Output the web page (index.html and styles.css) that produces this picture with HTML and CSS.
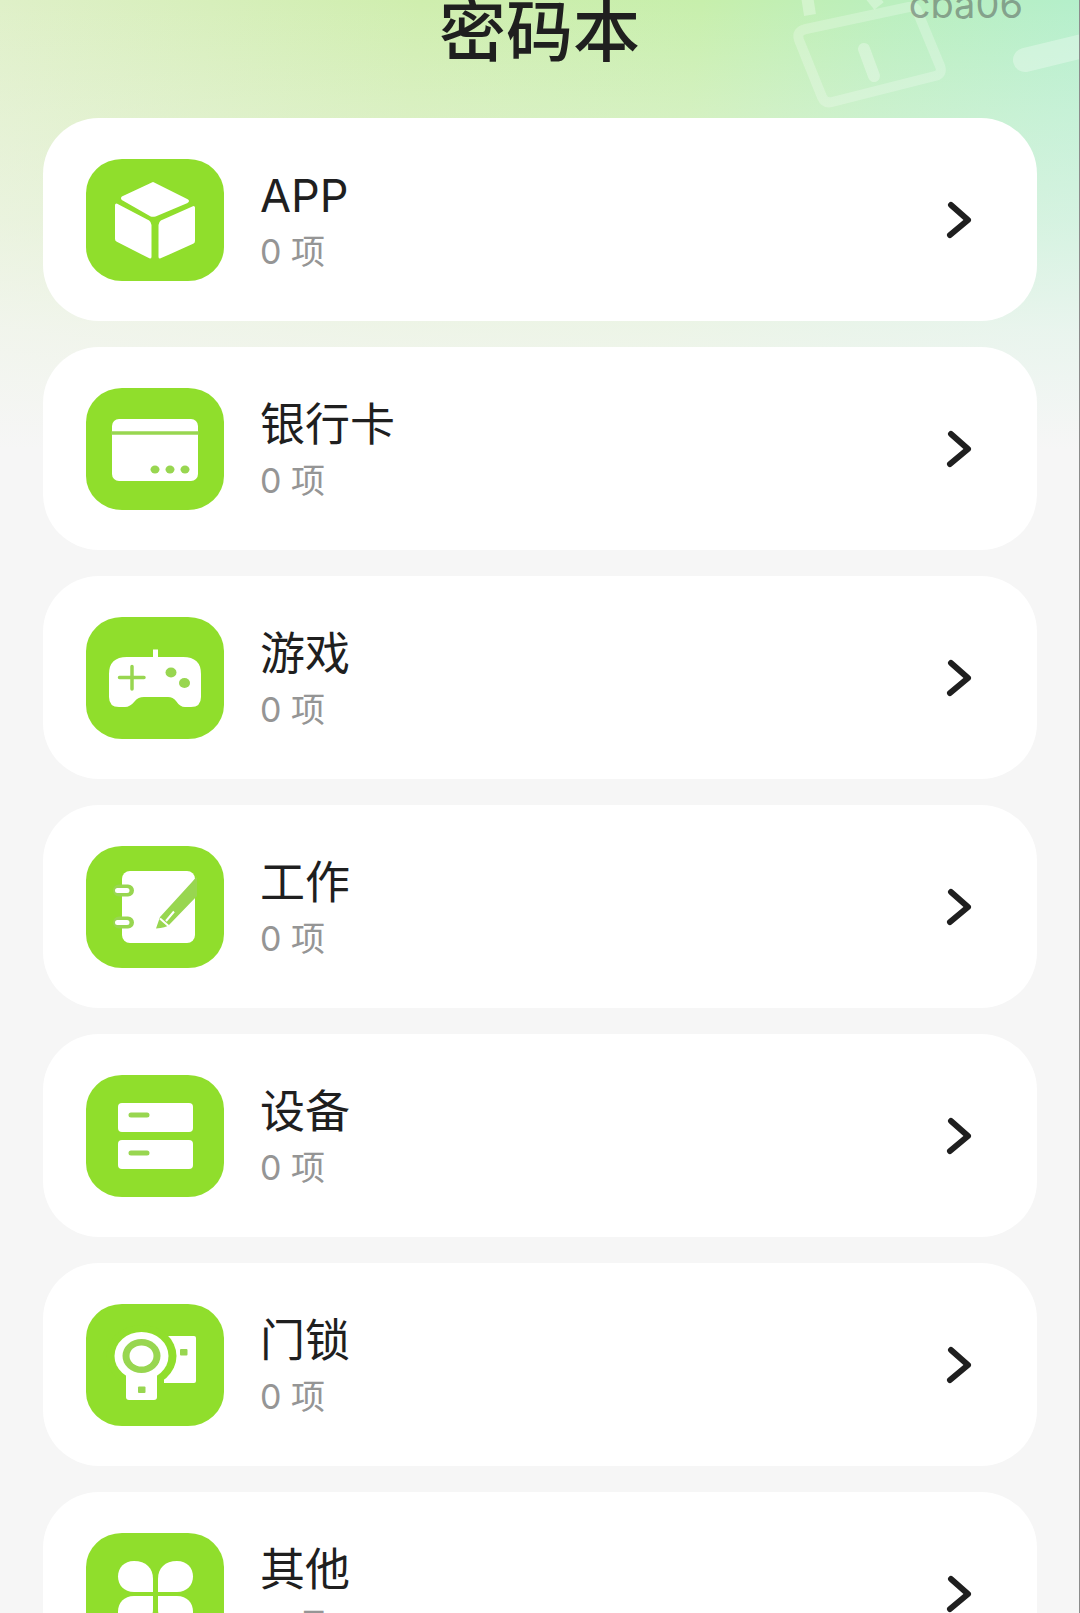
FILE: index.html
```html
<!DOCTYPE html>
<html lang="zh-CN">
<head>
<meta charset="utf-8">
<meta name="viewport" content="width=device-width, initial-scale=1">
<title>密码本</title>
<link rel="stylesheet" href="styles.css">
</head>
<body>
<div class="screen">
  <svg class="ornament" viewBox="0 0 300 120" aria-hidden="true">
    <g fill="none" stroke="#fff" stroke-opacity=".3" stroke-linecap="round" stroke-linejoin="round">
      <path stroke-width="10" stroke-opacity=".24" d="M27 29L130 7Q137 6 139 13L161 66Q164 74 156 76L53 102Q46 104 43 97L20 40Q17 31 27 29Z"/>
      <path stroke-width="12" d="M85 49L95 76"/>
      <path stroke-width="12" stroke-linecap="butt" d="M28 -4L31 15M92 -4L100 6"/>
      <path stroke-width="24" d="M246 60L320 42"/>
    </g>
  </svg>

  <header class="header">
    <h1 class="title">密码本</h1>
    <span class="account">cba06</span>
  </header>

  <main>
    <ul class="list">
      <li>
        <a class="card" href="#app">
          <svg class="icon" viewBox="0 0 138 122" aria-hidden="true">
            <g class="solid">
              <path d="M67 24.500L101 41.500Q102 42 101 42.500L69 56Q67 56.500 65 56L37 40Q36 39 37 38.500Z"/>
              <path d="M30.500 46L62 62.500Q64 64 64 66V98L31.500 81.500Q30.500 81 30.500 80Z"/>
              <path d="M107.500 48.500L76 62.500Q74 64 74 66V98L106.500 83.500Q107.500 83 107.500 82Z"/>
            </g>
          </svg>
          <span class="text"><span class="name">APP</span><span class="count">0 项</span></span>
          <svg class="chevron" viewBox="0 0 26 38" aria-hidden="true"><path d="M5 4L22 19L4 34"/></svg>
        </a>
      </li>
      <li>
        <a class="card" href="#bank">
          <svg class="icon" viewBox="0 0 138 122" aria-hidden="true">
            <rect class="white" x="26" y="31" width="86" height="62" rx="7"/>
            <path class="cut" stroke-width="3.500" d="M25 45H113"/>
            <g class="green"><ellipse cx="69" cy="81.500" rx="4.500" ry="4"/><ellipse cx="84" cy="81.500" rx="4.500" ry="4"/><ellipse cx="99" cy="81.500" rx="4.500" ry="4"/></g>
          </svg>
          <span class="text"><span class="name">银行卡</span><span class="count">0 项</span></span>
          <svg class="chevron" viewBox="0 0 26 38" aria-hidden="true"><path d="M5 4L22 19L4 34"/></svg>
        </a>
      </li>
      <li>
        <a class="card" href="#games">
          <svg class="icon" viewBox="0 0 138 122" aria-hidden="true">
            <path class="white" d="M67 32.500H72V40H97Q115 40 115 57V80Q115 90 105 90H99Q94 90 90 84Q87 80 82 80H58Q52 80 49 84Q44 90 39 90H33Q23 90 23 80V57Q23 40 41 40H67Z"/>
            <path class="cut round" stroke-width="3.500" d="M33.500 60.500H58M46 49.500V72"/>
            <g class="green"><ellipse cx="85" cy="55.500" rx="5.500" ry="5"/><ellipse cx="98.500" cy="66" rx="5.500" ry="5"/></g>
          </svg>
          <span class="text"><span class="name">游戏</span><span class="count">0 项</span></span>
          <svg class="chevron" viewBox="0 0 26 38" aria-hidden="true"><path d="M5 4L22 19L4 34"/></svg>
        </a>
      </li>
      <li>
        <a class="card" href="#work">
          <svg class="icon" viewBox="0 0 138 122" aria-hidden="true">
            <rect class="white" x="36" y="25" width="73" height="72" rx="8"/>
            <path class="green" d="M70 82.500L74 71L106 36Q108 33 111 31V50L83 79Q80 81.500 70 82.500Z"/>
            <path class="line" stroke-width="2" d="M74 72.500L82.500 80M80 75L88 65.500"/>
            <path class="cut round" stroke-width="12" d="M33 44.500H42M33 76.500H42"/>
            <path class="line round" stroke-width="5" d="M31.500 44.500H41M31.500 76.500H41"/>
          </svg>
          <span class="text"><span class="name">工作</span><span class="count">0 项</span></span>
          <svg class="chevron" viewBox="0 0 26 38" aria-hidden="true"><path d="M5 4L22 19L4 34"/></svg>
        </a>
      </li>
      <li>
        <a class="card" href="#devices">
          <svg class="icon" viewBox="0 0 138 122" aria-hidden="true">
            <rect class="white" x="32" y="28" width="75" height="29" rx="4"/>
            <rect class="white" x="32" y="65" width="75" height="29" rx="4"/>
            <path class="cut round" stroke-width="5" d="M45 40H61M45 78H61"/>
          </svg>
          <span class="text"><span class="name">设备</span><span class="count">0 项</span></span>
          <svg class="chevron" viewBox="0 0 26 38" aria-hidden="true"><path d="M5 4L22 19L4 34"/></svg>
        </a>
      </li>
      <li>
        <a class="card" href="#locks">
          <svg class="icon" viewBox="0 0 138 122" aria-hidden="true">
            <rect class="white" x="76" y="32" width="34" height="47" rx="2"/>
            <ellipse class="gap" cx="55.500" cy="52" rx="35" ry="31"/>
            <rect class="gap" x="56" y="60" width="22" height="24"/>
            <ellipse class="white" cx="55.500" cy="52" rx="27" ry="24"/>
            <rect class="white" x="40" y="66" width="31" height="30" rx="3"/>
            <ellipse class="green" cx="55.500" cy="52" rx="19" ry="17"/>
            <ellipse class="white" cx="55.500" cy="52" rx="12" ry="10.500"/>
            <rect class="green" x="52" y="82.500" width="7.500" height="6.500" rx="1"/>
            <rect class="green" x="94" y="45" width="7.500" height="6.500" rx="1"/>
          </svg>
          <span class="text"><span class="name">门锁</span><span class="count">0 项</span></span>
          <svg class="chevron" viewBox="0 0 26 38" aria-hidden="true"><path d="M5 4L22 19L4 34"/></svg>
        </a>
      </li>
      <li>
        <a class="card" href="#others">
          <svg class="icon" viewBox="0 0 138 122" aria-hidden="true">
            <g class="white">
              <path d="M48 28C60 28 67 35 67 46V59H48C38 59 32 52 32 43.500C32 35 38 28 48 28Z"/>
              <path d="M91 28C79 28 72 35 72 46V59H91C101 59 107 52 107 43.500C107 35 101 28 91 28Z"/>
              <path d="M48 94C60 94 67 87 67 76V63H48C38 63 32 70 32 78.500C32 87 38 94 48 94Z"/>
              <path d="M91 94C79 94 72 87 72 76V63H91C101 63 107 70 107 78.500C107 87 101 94 91 94Z"/>
            </g>
          </svg>
          <span class="text"><span class="name">其他</span><span class="count">0 项</span></span>
          <svg class="chevron" viewBox="0 0 26 38" aria-hidden="true"><path d="M5 4L22 19L4 34"/></svg>
        </a>
      </li>
    </ul>
  </main>
</div>
</body>
</html>
```
FILE: styles.css
```css
* {
  box-sizing: border-box;
}

body {
  margin: 0;
  background: #f6f6f6;
  color: #1f1f1f;
  font-family: Inter, "Noto Sans CJK SC", sans-serif;
}

.screen {
  position: relative;
  height: 100vh;
  overflow: hidden;
  border-right: 1px solid #8c8c8c;
  background:
    linear-gradient(rgba(246, 246, 246, 0), rgba(246, 246, 246, .27) 110px, rgba(246, 246, 246, .5) 220px, rgba(246, 246, 246, .8) 330px, #f6f6f6 450px),
    linear-gradient(97deg, #dff0c8, #cfeeae 33%, #c7efac 55%, #baefbe 70%, #b4efcc 86%, #b4f0d8);
}

.ornament {
  position: absolute;
  top: 0;
  right: 0;
  width: 300px;
  height: 120px;
}

.header {
  position: relative;
  display: grid;
  grid-template-columns: 1fr auto 1fr;
  height: 118px;
  padding: 0 56px;
}

.title {
  grid-column: 2;
  margin: 0;
  font-size: 67px;
  font-weight: 500;
  line-height: 64px;
}

.account {
  justify-self: end;
  margin-top: -20px;
  color: rgba(80, 85, 82, .5);
  font-size: 38px;
  line-height: 48px;
}

.list {
  position: relative;
  display: grid;
  gap: 26px;
  margin: 0;
  padding: 0 42px 26px 43px;
  list-style: none;
}

.card {
  display: flex;
  align-items: center;
  gap: 36px;
  height: 203px;
  padding: 0 65px 0 43px;
  border-radius: 56px;
  background: #fff;
  color: inherit;
  text-decoration: none;
}

.icon {
  flex: none;
  width: 138px;
  height: 122px;
  border-radius: 36px / 34px;
  background: #90de2c;
}

.white {
  fill: #fff;
}

.solid {
  fill: #fff;
  stroke: #fff;
  stroke-width: 3px;
  stroke-linejoin: round;
}

.green {
  fill: #98d650;
}

.gap {
  fill: #90de2c;
}

.cut {
  fill: none;
  stroke: #98d650;
}

.line {
  fill: none;
  stroke: #fff;
}

.round {
  stroke-linecap: round;
}

.text {
  display: flex;
  flex: 1;
  flex-direction: column;
  padding-top: 4px;
}

.name {
  font-size: 45px;
  font-weight: 400;
  line-height: 60px;
}

.count {
  color: #959595;
  font-size: 34px;
  line-height: 52px;
}

.chevron {
  flex: none;
  width: 26px;
  height: 38px;
  fill: none;
  stroke: #1f1f1f;
  stroke-width: 6px;
  stroke-linecap: round;
  stroke-linejoin: round;
}
```
